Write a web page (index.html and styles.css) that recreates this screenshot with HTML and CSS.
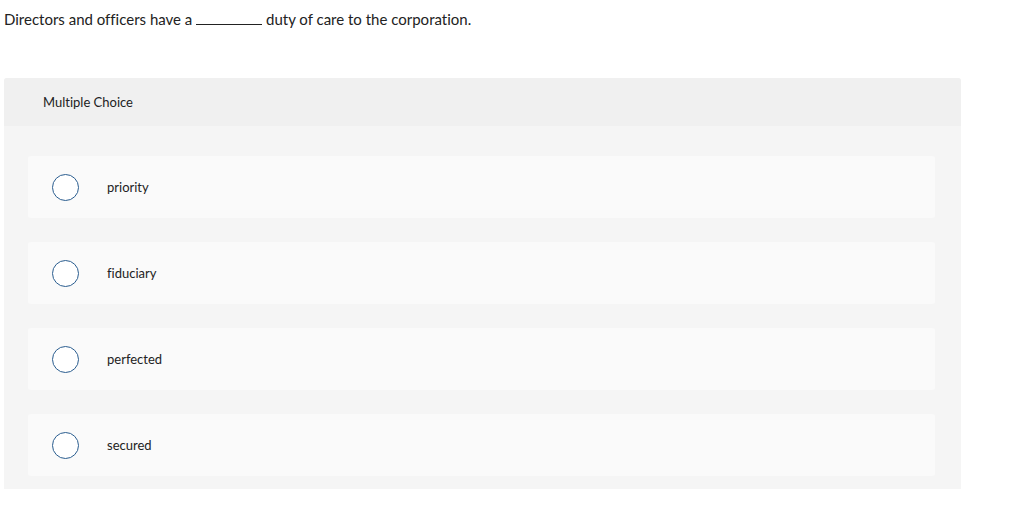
FILE: index.html
```html
<!DOCTYPE html>
<html lang="en">
<head>
<meta charset="utf-8">
<title>Multiple Choice</title>
<link rel="stylesheet" href="styles.css">
</head>
<body>
<div class="question">Directors and officers have a <span class="blank"></span> duty of care to the corporation.</div>
<div class="panel">
  <div class="panel-head">Multiple Choice</div>
  <div class="options">
    <div class="option"><span class="radio"></span><span class="label">priority</span></div>
    <div class="option"><span class="radio"></span><span class="label">fiduciary</span></div>
    <div class="option"><span class="radio"></span><span class="label">perfected</span></div>
    <div class="option"><span class="radio"></span><span class="label">secured</span></div>
  </div>
</div>
</body>
</html>
```
FILE: styles.css
```css
html, body {
  margin: 0;
  padding: 0;
  background: #fff;
}
body {
  font-family: "Lato", "Open Sans", sans-serif;
  font-variant-ligatures: none;
  color: #222;
  padding: 9px 63px 0 4px;
}
.question {
  font-size: 15px;
  line-height: 20px;
  height: 21px;
}
.blank {
  display: inline-block;
  width: 66px;
  border-bottom: 1px solid #222;
  vertical-align: baseline;
}
.panel {
  margin-top: 48px;
  background: #f5f5f5;
  border-radius: 3px 3px 0 0;
  padding-bottom: 13px;
}
.panel-head {
  background: #f0f0f0;
  border-radius: 3px 3px 0 0;
  height: 48px;
  box-sizing: border-box;
  padding-left: 39px;
  display: flex;
  align-items: center;
  font-size: 13px;
  color: #222;
}
.options {
  padding: 30px 26px 0 24px;
  display: flex;
  flex-direction: column;
  gap: 24px;
}
.option {
  background: #fafafa;
  border-radius: 3px;
  height: 62px;
  display: flex;
  align-items: center;
  padding-left: 24px;
}
.radio {
  width: 25px;
  height: 25px;
  border: 1px solid #2a5d8f;
  border-radius: 50%;
  background: #fff;
  flex: none;
}
.label {
  margin-left: 28px;
  font-size: 13px;
  color: #222;
}
```
